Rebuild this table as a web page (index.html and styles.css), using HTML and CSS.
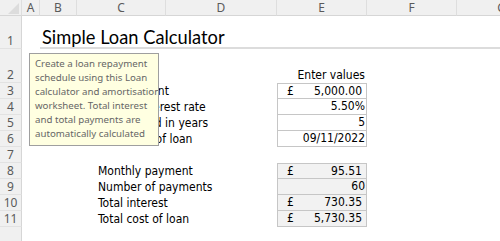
FILE: index.html
```html
<!DOCTYPE html>
<html>
<head>
<meta charset="utf-8">
<link rel="stylesheet" href="styles.css">
</head>
<body>
<div class="sheet">
  <div class="corner hd"><svg width="22" height="16" viewBox="0 0 22 16"><polygon points="19,3 19,14 8,14" fill="#dcdcdc"/></svg></div>
  <div class="hd col">A</div>
  <div class="hd col">B</div>
  <div class="hd col">C</div>
  <div class="hd col">D</div>
  <div class="hd col">E</div>
  <div class="hd col">F</div>
  <div class="hd col">G</div>

  <div class="rh r1">1</div>
  <div class="title">Simple Loan Calculator</div>

  <div class="rh r2">2</div>
  <div class="enter r2">Enter values</div>

  <div class="rh r3">3</div>
  <div class="label r3">Loan amount</div>
  <div class="val in r3"><span>£</span><span>5,000.00</span></div>

  <div class="rh r4">4</div>
  <div class="label r4">Annual interest rate</div>
  <div class="val in r4 num">5.50%</div>

  <div class="rh r5">5</div>
  <div class="label r5">Loan period in years</div>
  <div class="val in r5 num">5</div>

  <div class="rh r6">6</div>
  <div class="label r6">Start date of loan</div>
  <div class="val in r6 num">09/11/2022</div>

  <div class="rh r7">7</div>

  <div class="rh r8">8</div>
  <div class="label r8">Monthly payment</div>
  <div class="val out r8"><span>£</span><span>95.51</span></div>

  <div class="rh r9">9</div>
  <div class="label r9">Number of payments</div>
  <div class="val out r9 num">60</div>

  <div class="rh r10">10</div>
  <div class="label r10">Total interest</div>
  <div class="val out r10"><span>£</span><span>730.35</span></div>

  <div class="rh r11">11</div>
  <div class="label r11">Total cost of loan</div>
  <div class="val out r11"><span>£</span><span>5,730.35</span></div>

  <div class="rh r12"></div>

  <div class="tip">Create a loan repayment<br>schedule using this Loan<br>calculator and amortisation<br>worksheet. Total interest<br>and total payments are<br>automatically calculated</div>
</div>
</body>
</html>
```

FILE: styles.css
```css
* { box-sizing: border-box; }
html, body { margin: 0; padding: 0; background: #fff; }
body { width: 500px; height: 241px; overflow: hidden; }

.sheet {
  position: relative;
  width: 500px;
  height: 241px;
  overflow: hidden;
  display: grid;
  grid-template-columns: 22px 18px 37px 89px 111px 90px 90px 90px;
  grid-template-rows: 16px 33px 34px repeat(9, 16px) 20px;
  font-family: "DejaVu Sans Condensed", "DejaVu Sans", sans-serif;
  color: #000;
}

.hd {
  background: #f0f0f0;
  border-bottom: 1px solid #d6d6d6;
  color: #5a5a5a;
  font-family: "Noto Sans", sans-serif;
  font-size: 12px;
  line-height: 15px;
  text-align: center;
  white-space: nowrap;
  overflow: hidden;
}
.col { border-right: 1px solid #dedede; }
.corner { grid-column: 1; grid-row: 1; border-right: 1px solid #dedede; }
.corner svg { display: block; }

.rh {
  grid-column: 1;
  background: #f0f0f0;
  border-right: 1px solid #d6d6d6;
  border-bottom: 1px solid #e2e2e2;
  color: #5a5a5a;
  font-family: "Noto Sans", sans-serif;
  font-size: 12px;
  display: flex;
  align-items: flex-end;
  justify-content: center;
  line-height: 15px;
}

.r1 { grid-row: 2; }
.r2 { grid-row: 3; }
.r3 { grid-row: 4; }
.r4 { grid-row: 5; }
.r5 { grid-row: 6; }
.r6 { grid-row: 7; }
.r7 { grid-row: 8; }
.r8 { grid-row: 9; }
.r9 { grid-row: 10; }
.r10 { grid-row: 11; }
.r11 { grid-row: 12; }
.r12 { grid-row: 13; border-bottom: none; }

.title {
  grid-column: 3 / 9;
  grid-row: 2;
  border-bottom: 2px solid #dcdcdc;
  font-family: "Lato", sans-serif;
  font-size: 18.3px;
  line-height: 19px;
  padding-left: 2px;
  display: flex;
  align-items: flex-end;
  padding-bottom: 0;
  white-space: nowrap;
}

.label {
  grid-column: 4 / 6;
  padding-left: 21px;
  font-size: 12px;
  line-height: 16px;
  white-space: nowrap;
}

.enter {
  grid-column: 6;
  text-align: right;
  font-size: 12px;
  line-height: 16px;
  padding-right: 2px;
  align-self: end;
  white-space: nowrap;
}

.val {
  grid-column: 6;
  border-left: 1px solid #c6c6c6;
  border-right: 1px solid #c6c6c6;
  border-bottom: 1px solid #c6c6c6;
  font-size: 12px;
  line-height: 15px;
  display: flex;
  justify-content: space-between;
  padding: 0 4px 0 9px;
  white-space: nowrap;
}
.val.num { justify-content: flex-end; padding-right: 1px; }
.val.r3, .val.r8 { border-top: 1px solid #c6c6c6; line-height: 14px; }
.in { background: #fff; }
.out { background: #f2f2f2; }

.tip {
  position: absolute;
  left: 29px;
  top: 53px;
  width: 130px;
  height: 93px;
  background: #ffffe1;
  border: 1px solid #9f9f9f;
  color: #666;
  font-family: "Noto Sans", sans-serif;
  font-size: 9.7px;
  line-height: 14px;
  padding: 3px 3px 3px 5px;
  white-space: nowrap;
  overflow: hidden;
  z-index: 2;
}
```
